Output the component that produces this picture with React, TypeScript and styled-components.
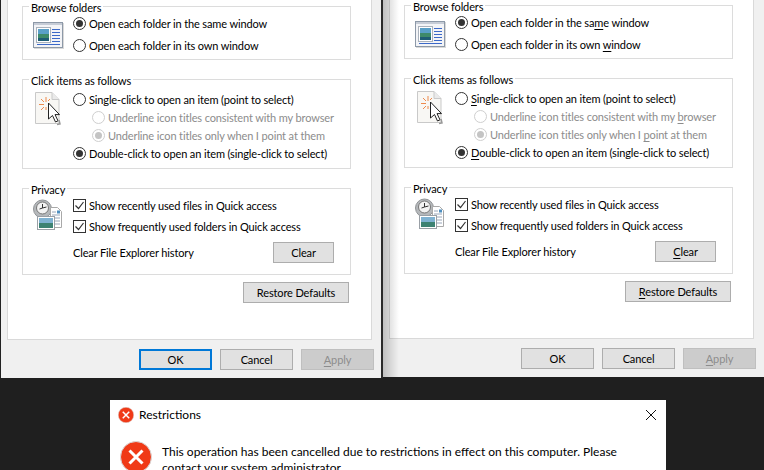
import React from 'react';
import styled, { createGlobalStyle } from 'styled-components';

const GlobalStyle = createGlobalStyle`
    html, body {
        margin: 0;
        width: 764px;
        height: 470px;
        overflow: hidden;
        background: #1f1f1f;
    }
    body {
        font-family: Lato, Roboto, "Liberation Sans", sans-serif;
        font-size: 12px;
        color: #000;
    }
`;

const Page = styled.div`
    width: 764px;
    height: 470px;
    overflow: hidden;
`;

const WindowRow = styled.div`
    display: flex;
    align-items: flex-start;
`;

const Window = styled.section<{ $second?: boolean }>`
    box-sizing: border-box;
    position: relative;
    width: ${p => (p.$second ? 381 : 383)}px;
    height: ${p => (p.$second ? 377 : 378)}px;
    padding: 0 9px 0 6px;
    font-size: 11px;
    letter-spacing: -0.13px;
    background: #f0f0f0;
    border-left: ${p => (p.$second ? '0' : '1px solid #222')};
    border-right: ${p => (p.$second ? '0' : '2px solid #2b2b2b')};

    /* shadow the left window throws over the right one */
    &::after {
        content: '';
        display: ${p => (p.$second ? 'block' : 'none')};
        position: absolute;
        top: 0;
        bottom: 0;
        left: 0;
        width: 16px;
        background: linear-gradient(90deg, rgba(0, 0, 0, 0.2), rgba(0, 0, 0, 0));
        pointer-events: none;
    }
`;

const Panel = styled.div<{ $second?: boolean }>`
    box-sizing: border-box;
    width: 365px;
    height: ${p => (p.$second ? 339 : 340)}px;
    padding: ${p => (p.$second ? 5 : 6)}px 21px 0 14px;
    background: #fff;
    border: 1px solid #d9d9d9;
    border-top: 0;
`;

const Group = styled.fieldset<{ $height: number }>`
    box-sizing: border-box;
    position: relative;
    width: 329px;
    height: ${p => p.$height}px;
    margin: 0 0 19px;
    padding: 0;
    border: 1px solid #dcdcdc;
`;

const Legend = styled.legend`
    position: absolute;
    top: -7px;
    left: 6px;
    padding: 0 2px;
    line-height: 15px;
    background: #fff;
`;

const GroupBody = styled.div`
    display: flex;
    height: 100%;
    padding-left: 10px;
`;

const IconSlot = styled.div<{ $top: number; $left?: number }>`
    box-sizing: border-box;
    flex: none;
    width: 40px;
    padding: ${p => p.$top}px 0 0 ${p => p.$left ?? 0}px;
`;

const Options = styled.div<{ $top: number }>`
    display: flex;
    flex-direction: column;
    padding-top: ${p => p.$top}px;
`;

const Option = styled.div<{ $disabled?: boolean; $indent?: boolean; $height: number }>`
    display: flex;
    align-items: center;
    gap: 3px;
    height: ${p => p.$height}px;
    margin-left: ${p => (p.$indent ? 19 : 0)}px;
    color: ${p => (p.$disabled ? '#8c8c8c' : '#000')};
    white-space: nowrap;
`;

const Radio = styled.span<{ $checked?: boolean; $disabled?: boolean }>`
    box-sizing: border-box;
    flex: none;
    display: flex;
    align-items: center;
    justify-content: center;
    width: 13px;
    height: 13px;
    border: 1px solid ${p => (p.$disabled ? '#cfcfcf' : '#333')};
    border-radius: 50%;
    background: #fff;
    &::after {
        content: '';
        display: ${p => (p.$checked ? 'block' : 'none')};
        width: 7px;
        height: 7px;
        border-radius: 50%;
        background: ${p => (p.$disabled ? '#c4c4c4' : '#333')};
    }
`;

const Check = styled.span`
    box-sizing: border-box;
    flex: none;
    display: flex;
    align-items: center;
    justify-content: center;
    width: 13px;
    height: 13px;
    border: 1px solid #333;
    background: #fff;
`;

const Key = styled.span`
    text-decoration: underline;
    text-underline-offset: 2px;
    text-decoration-thickness: 1px;
`;

const ClearRow = styled.div`
    display: flex;
    align-items: center;
    justify-content: space-between;
    width: 261px;
    margin-top: 5px;
`;

const Button = styled.button<{ $width?: number; $default?: boolean }>`
    box-sizing: border-box;
    width: ${p => p.$width ?? 73}px;
    height: 21px;
    padding: 0;
    font: inherit;
    letter-spacing: inherit;
    color: ${p => (p.disabled ? '#8c8c8c' : '#000')};
    background: ${p => (p.disabled ? '#cccccc' : '#e1e1e1')};
    border: ${p => (p.$default ? '2px solid #0078d7' : '1px solid #adadad')};
    border-color: ${p => (p.disabled ? '#bfbfbf' : '')};
`;

const RestoreRow = styled.div`
    display: flex;
    justify-content: flex-end;
    width: 327px;
    margin-top: -12px;
`;

const Footer = styled.div`
    display: flex;
    justify-content: flex-end;
    gap: 8px;
    width: 367px;
    padding-top: 9px;
`;

const Gap = styled.div`
    height: 22px;
`;

const Dialog = styled.section`
    box-sizing: border-box;
    width: 556px;
    height: 70px;
    margin-left: 110px;
    background: #fff;
    overflow: hidden;
`;

const DialogTitle = styled.div`
    display: flex;
    align-items: center;
    gap: 5px;
    height: 29px;
    padding: 0 9px 0 8px;
`;

const DialogName = styled.span`
    flex: 1;
`;

const DialogBody = styled.div`
    display: flex;
    gap: 10px;
    padding: 12px 10px 0 10px;
`;

const Message = styled.p`
    width: 470px;
    margin: 0;
    padding-top: 3px;
    font-size: 12px;
    line-height: 16px;
`;

function FolderIcon() {
    return (
        <svg width="31" height="27" viewBox="0 0 31 27" style={{ display: 'block' }}>
            <rect x="1" y="1" width="30" height="26" fill="#d9d9d9" />
            <rect x="0.5" y="0.5" width="29" height="25" fill="#f3f4f7" stroke="#8d99a8" />
            <rect x="1" y="1" width="28" height="2" fill="#c6ccd6" />
            <rect x="3.500" y="5.500" width="14" height="15" fill="#fff" stroke="#aab2bc" />
            <rect x="5" y="7" width="11" height="6" fill="#5aa0c8" />
            <rect x="5" y="12" width="11" height="4" fill="#3e8a6a" />
            <rect x="5" y="16" width="11" height="3" fill="#1f5d74" />
            <path d="M19 7.500h8M19 10.500h8M19 13.500h8M19 16.500h8M19 19.500h8M4 22.500h23" stroke="#3c69c8" strokeWidth="1" />
        </svg>
    );
}

function ClickIcon() {
    return (
        <svg width="28" height="34" viewBox="0 0 28 34" style={{ display: 'block' }}>
            <path d="M.5.5H17l7 7v24H.5z" fill="#f8f7f4" stroke="#c9c9c9" />
            <path d="M17 .5v7h7" fill="#eaeaea" stroke="#c9c9c9" />
            <path d="M11 5v5M11 15v3M4 12.500h5M6 7l3 3M6 18l3-3M15 7l-2 2" stroke="#ee8a4d" strokeWidth="1" />
            <path d="M13.500 11v16l4-3.500 3 6.500 2.500-1.200-3-6.200h4.500z" fill="#fff" stroke="#222" strokeWidth="1" />
            <path d="M24 28l1 4-3 .5" fill="none" stroke="#999" strokeWidth="1.500" />
        </svg>
    );
}

function PrivacyIcon() {
    return (
        <svg width="30" height="32" viewBox="0 0 30 32" style={{ display: 'block' }}>
            <circle cx="9.500" cy="10" r="9" fill="#b5b8bb" stroke="#909396" />
            <circle cx="9.500" cy="9" r="6" fill="#f3f3f3" stroke="#777" />
            <path d="M9.500 5v4l-3 1M9.500 9l4-1" stroke="#333" fill="none" />
            <path d="M17.500 8.500h7l4 4v16h-11z" fill="#fff" stroke="#a9a9a9" />
            <path d="M19 13h4M19 16h8M19 19h8M19 22h8M19 25h8" stroke="#98a6ba" />
            <rect x="24" y="11.500" width="3" height="3" fill="#4e8fc0" />
            <rect x="4.500" y="17.500" width="17" height="13" fill="#fff" stroke="#9aa0a6" />
            <rect x="6" y="19" width="14" height="5" fill="#7fb2d2" />
            <rect x="6" y="24" width="14" height="5" fill="#3d8272" />
        </svg>
    );
}

function ErrorIcon({ size }: { size: number }) {
    return (
        <svg width={size} height={size} viewBox="0 0 32 32" style={{ flex: 'none' }}>
            <circle cx="16" cy="16" r="15.500" fill="#f03a17" stroke="#d9d9d9" strokeWidth="1" />
            <path d="M9.500 9.500l13 13M22.500 9.500l-13 13" stroke="#fff" strokeWidth="3" />
        </svg>
    );
}

function CheckMark() {
    return (
        <svg width="11" height="11" viewBox="0 0 11 11">
            <path d="M1.500 5.500l3 3 5-6.500" fill="none" stroke="#333" strokeWidth="1.200" />
        </svg>
    );
}

function FolderOptions({ second }: { second?: boolean }) {
    // the second window shows the access keys underlined
    const key = (c: string) => (second ? <Key>{c}</Key> : c);
    return (
        <Window $second={second}>
            <Panel $second={second}>
                <Group $height={54}>
                    <Legend>Browse folders</Legend>
                    <GroupBody>
                        <IconSlot $top={15}><FolderIcon /></IconSlot>
                        <Options $top={5}>
                            <Option $height={22}><Radio $checked /><span>Open each folder in the sa{key('m')}e window</span></Option>
                            <Option $height={22}><Radio /><span>Open each folder in its own {key('w')}indow</span></Option>
                        </Options>
                    </GroupBody>
                </Group>
                <Group $height={90}>
                    <Legend>Click items as follows</Legend>
                    <GroupBody>
                        <IconSlot $top={12} $left={2}><ClickIcon /></IconSlot>
                        <Options $top={10}>
                            <Option $height={18}>
                                <Radio />
                                <span>{key('S')}ingle-click to open an item (point to select)</span>
                            </Option>
                            <Option $height={18} $indent $disabled>
                                <Radio $disabled />
                                <span>Underline icon titles consistent with my {key('b')}rowser</span>
                            </Option>
                            <Option $height={18} $indent $disabled>
                                <Radio $checked $disabled />
                                <span>Underline icon titles only when I {key('p')}oint at them</span>
                            </Option>
                            <Option $height={18}>
                                <Radio $checked />
                                <span>{key('D')}ouble-click to open an item (single-click to select)</span>
                            </Option>
                        </Options>
                    </GroupBody>
                </Group>
                <Group $height={87}>
                    <Legend>Privacy</Legend>
                    <GroupBody>
                        <IconSlot $top={10}><PrivacyIcon /></IconSlot>
                        <Options $top={6}>
                            <Option $height={21}><Check><CheckMark /></Check><span>Show recently used files in Quick access</span></Option>
                            <Option $height={21}><Check><CheckMark /></Check><span>Show frequently used folders in Quick access</span></Option>
                            <ClearRow>
                                <span>Clear File Explorer history</span>
                                <Button $width={61}>{key('C')}lear</Button>
                            </ClearRow>
                        </Options>
                    </GroupBody>
                </Group>
                <RestoreRow>
                    <Button $width={106}>{key('R')}estore Defaults</Button>
                </RestoreRow>
            </Panel>
            <Footer>
                <Button $default={!second}>OK</Button>
                <Button>Cancel</Button>
                <Button disabled><Key>A</Key>pply</Button>
            </Footer>
        </Window>
    );
}

export default function App() {
    return (
        <Page>
            <GlobalStyle />
            <WindowRow>
                <FolderOptions />
                <FolderOptions second />
            </WindowRow>
            <Gap />
            <Dialog>
                <DialogTitle>
                    <ErrorIcon size={16} />
                    <DialogName>Restrictions</DialogName>
                    <svg width="12" height="12" viewBox="0 0 12 12">
                        <path d="M1 1l10 10M11 1L1 11" stroke="#111" strokeWidth="1" />
                    </svg>
                </DialogTitle>
                <DialogBody>
                    <ErrorIcon size={32} />
                    <Message>This operation has been cancelled due to restrictions in effect on this computer. Please contact your system administrator.</Message>
                </DialogBody>
            </Dialog>
        </Page>
    );
}
